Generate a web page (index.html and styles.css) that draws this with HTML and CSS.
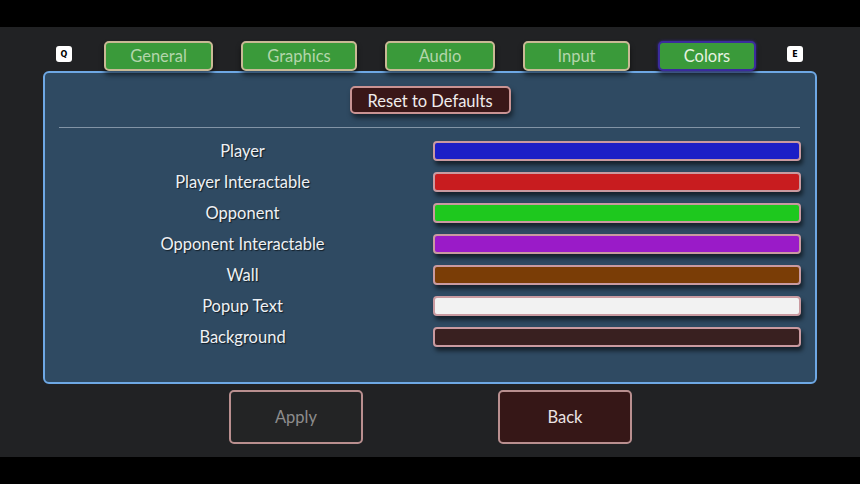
FILE: index.html
```html
<!DOCTYPE html>
<html>
<head>
<meta charset="utf-8">
<link rel="stylesheet" href="styles.css">
</head>
<body>
<div class="screen">
  <div class="letterbox top"></div>
  <div class="main">
    <div class="tabbar">
      <div class="key">Q</div>
      <div class="tabs">
        <div class="tab tab-general">General</div>
        <div class="tab tab-graphics">Graphics</div>
        <div class="tab tab-audio">Audio</div>
        <div class="tab tab-input">Input</div>
        <div class="tab tab-colors active">Colors</div>
      </div>
      <div class="key">E</div>
    </div>
    <div class="panel">
      <div class="reset">Reset to Defaults</div>
      <div class="sep"></div>
      <div class="rows">
        <div class="row"><div class="label">Player</div><div class="swatch c-player"></div></div>
        <div class="row"><div class="label">Player Interactable</div><div class="swatch c-player-int"></div></div>
        <div class="row"><div class="label">Opponent</div><div class="swatch c-opp"></div></div>
        <div class="row"><div class="label">Opponent Interactable</div><div class="swatch c-opp-int"></div></div>
        <div class="row"><div class="label">Wall</div><div class="swatch c-wall"></div></div>
        <div class="row"><div class="label">Popup Text</div><div class="swatch c-popup"></div></div>
        <div class="row"><div class="label">Background</div><div class="swatch c-bg"></div></div>
      </div>
    </div>
    <div class="actions">
      <div class="btn btn-apply">Apply</div>
      <div class="btn btn-back">Back</div>
    </div>
  </div>
  <div class="letterbox bottom"></div>
</div>
</body>
</html>
```
FILE: styles.css
```css
* { box-sizing: border-box; }
html, body { margin: 0; padding: 0; }
body {
  width: 860px;
  height: 484px;
  background: #000;
  font-family: "Lato", "Noto Sans", sans-serif;
  overflow: hidden;
}
.screen { display: flex; flex-direction: column; height: 484px; }
.letterbox.top { height: 27px; background: #000; }
.letterbox.bottom { flex: 1; background: #000; }
.main {
  height: 430px;
  background: #212224;
  padding-top: 14px;
}
.tabbar {
  display: flex;
  align-items: center;
  height: 30px;
  padding-left: 56px;
  position: relative;
  z-index: 2;
}
.key {
  width: 16px;
  height: 16px;
  background: #fff;
  border-radius: 3px;
  color: #000;
  font-family: "DejaVu Sans", sans-serif;
  font-weight: bold;
  font-size: 8px;
  display: flex;
  align-items: center;
  justify-content: center;
  margin-top: -4px;
}
.tabs {
  display: flex;
  gap: 28px;
  margin: 0 31px 0 32px;
}
.tab {
  height: 30px;
  background: #3a9a3a;
  border: 2px solid #c9b995;
  border-radius: 5px;
  color: #b3d6ab;
  font-size: 16.5px;
  display: flex;
  align-items: center;
  justify-content: center;
  box-shadow: 0 4px 5px rgba(0,0,0,0.55);
}
.tab-general { width: 109px; }
.tab-graphics { width: 116px; }
.tab-audio { width: 110px; }
.tab-input { width: 107px; }
.tab-colors { width: 98px; }
.tab.active {
  border-color: #3b2c9c;
  color: #e6f2e0;
  box-shadow: 0 0 3px #3b2c9c, 0 4px 5px rgba(0,0,0,0.55);
}
.panel {
  margin-left: 43px;
  width: 774px;
  height: 313px;
  border: 2px solid #6ea8e4;
  border-radius: 6px;
  background: #2f4a62;
  display: flex;
  flex-direction: column;
  align-items: center;
  padding-top: 13px;
  position: relative;
  z-index: 1;
}
.reset {
  width: 161px;
  height: 28px;
  background: #3a1718;
  border: 2px solid #c99393;
  border-radius: 5px;
  color: #f0ecec;
  font-size: 16.5px;
  display: flex;
  align-items: center;
  justify-content: center;
  padding-top: 1px;
  box-shadow: 2px 4px 5px rgba(0,0,0,0.5);
}
.sep {
  align-self: stretch;
  margin: 13px 15px 0 14px;
  height: 1px;
  background: #8294a6;
}
.rows {
  align-self: stretch;
  margin-top: 13px;
  padding: 0 13px 0 15px;
  display: flex;
  flex-direction: column;
  gap: 11px;
}
.row {
  display: grid;
  grid-template-columns: 365px 368px;
  column-gap: 8px;
  height: 20px;
  align-items: center;
}
.label {
  text-align: center;
  color: #eef1f4;
  font-size: 16.5px;
  line-height: 20px;
  text-shadow: 1px 1px 1px rgba(0,0,0,0.6);
}
.swatch {
  height: 20px;
  border: 2px solid #c99aa0;
  border-radius: 4px;
  box-shadow: 2px 4px 4px rgba(0,0,0,0.55);
}
.c-player { background: #1c1fc6; }
.c-player-int { background: #c81c1f; }
.c-opp { background: #1ec81e; }
.c-opp-int { background: #9a1bc8; }
.c-wall { background: #7a3d06; }
.c-popup { background: #f2f2f2; }
.c-bg { background: #392020; }
.actions {
  display: flex;
  justify-content: center;
  gap: 135px;
  margin-top: 6px;
  padding-left: 1px;
}
.btn {
  width: 134px;
  height: 54px;
  border: 2px solid #b98f8f;
  border-radius: 5px;
  display: flex;
  align-items: center;
  justify-content: center;
  font-size: 16.5px;
}
.btn-apply { background: #232425; color: #8d8d8d; }
.btn-back { background: #361717; color: #ebe3e3; }
```
